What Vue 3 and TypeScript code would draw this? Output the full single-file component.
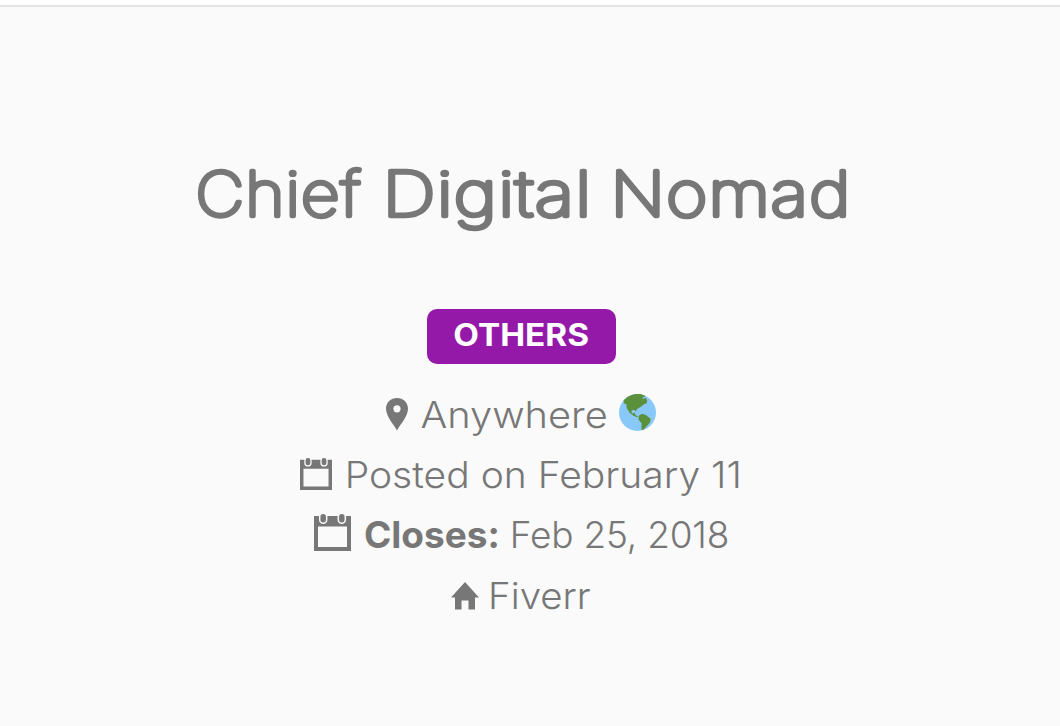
<script setup lang="ts">
import { ref } from 'vue';

type Word = {
    text:string
    x:number
    width:number
}
type Job = {
    title:Word[]
    category:string
    location:string
    posted:string
    closes:string
    company:string
}
const job = ref<Job>({
    title:[
        { text:'Chief', x:4.5, width:166 },
        { text:'Digital', x:191.5, width:210 },
        { text:'Nomad', x:419.5, width:241 }
    ],
    category:'OTHERS',
    location:'Anywhere',
    posted:'Posted on February 11',
    closes:'Feb 25, 2018',
    company:'Fiverr'
})
</script>
<template>
<div class="job-page">
    <div class="job-topbar"></div>
    <header class="job-header">
        <h1 class="job-title">
            <!-- the stroke rounds off the ends of the letters -->
            <svg class="title-text" viewBox="0 0 660 90">
                <text
                    v-for="word in job.title"
                    :key="word.text"
                    :x="word.x"
                    y="66"
                    :textLength="word.width"
                    lengthAdjust="spacingAndGlyphs"
                >{{ word.text }}</text>
            </svg>
        </h1>
        <span class="job-type"><span class="label">{{ job.category }}</span></span>
        <ul class="job-meta">
            <li class="location">
                <svg class="icon-pin" viewBox="0 0 22 33">
                    <path fill-rule="evenodd" d="M11 0C4.8 0 0 4.6 0 10.6C0 18 6.500 25 11 32.500C15.500 25 22 18 22 10.600C22 4.600 17.200 0 11 0ZM11 7.200A3.600 3.600 0 1 1 11 14.400A3.600 3.600 0 1 1 11 7.200Z" />
                </svg>
                <span class="text">{{ job.location }}</span>
                <svg class="icon-globe" viewBox="0 0 36 36">
                    <circle cx="18" cy="18" r="18" fill="#88c9f9" />
                    <path fill="#5c913b" d="M4.500 6.200C8 2.200 13 0 18 0C21 0 23.500 .6 26 2L23.500 3.200L22.800 5L25.800 3.600L27.400 6.200L27 9L24.300 10L21.500 12.500L19 13.600L17.200 15L16.400 17L14.600 15.300L12 16.200L12.600 19L15.300 18.300L15.800 20.400L18.600 21.600L18 22.600L14.600 21.500L10.400 18.400L7.500 13.500L7.200 10L4.700 9Z" />
                    <path fill="#5c913b" d="M19.200 21.200L22.500 19.300L26.500 20.700L30.800 24L30.300 27.500L27.400 31L23.500 35L21.800 34.600L22 28.500L19 25Z" />
                </svg>
            </li>
            <li class="posted">
                <svg class="icon-calendar" viewBox="0 0 37 37">
                    <path fill-rule="evenodd" d="M0 2H37V37H0ZM4 12.500V33H33V12.500Z" />
                    <rect class="ring" x="5.700" y="-.8" width="7" height="10" rx="3.500" />
                    <rect class="ring" x="24.300" y="-.8" width="7" height="10" rx="3.500" />
                </svg>
                <span class="text">{{ job.posted }}</span>
            </li>
            <li class="closes">
                <svg class="icon-calendar" viewBox="0 0 37 37">
                    <path fill-rule="evenodd" d="M0 2H37V37H0ZM4 12.500V33H33V12.500Z" />
                    <rect class="ring" x="5.700" y="-.8" width="7" height="10" rx="3.500" />
                    <rect class="ring" x="24.300" y="-.8" width="7" height="10" rx="3.500" />
                </svg>
                <strong class="text">Closes:</strong>
                <span class="text">{{ job.closes }}</span>
            </li>
            <li class="company">
                <svg class="icon-home" viewBox="0 0 28 28">
                    <path d="M14 0L28 15.500H24V27.500H17.500V18.500H10.500V27.500H4V15.500H0Z" />
                </svg>
                <span class="text">{{ job.company }}</span>
            </li>
        </ul>
    </header>
</div>
</template>
<style>
body {
  background: #fafafa;
}
</style>
<style scoped>
.job-page {
  box-sizing: border-box;
  height: 726px;
  overflow: hidden;
  background: #fafafa;
  color: #777;
  font-family: Inter, "Open Sans", sans-serif;
}
.job-topbar {
  height: 5px;
  background: #fff;
  border-bottom: 2px solid #e3e3e3;
}
.job-header {
  display: flex;
  flex-direction: column;
  align-items: center;
  width: 1042px;
  padding-top: 143px;
}
.job-title {
  display: flex;
  margin: 0;
}
.title-text {
  width: 660px;
  height: 90px;
}
.title-text text {
  fill: #777;
  stroke: #777;
  stroke-width: 4.5;
  stroke-linejoin: round;
  font-size: 61px;
  font-weight: 100;
  letter-spacing: 1px;
}
.job-type {
  display: block;
  box-sizing: border-box;
  width: 189px;
  height: 55px;
  margin-top: 69px;
  border-radius: 10px;
  background: #9519a9;
  color: #fff;
  font-size: 31px;
  font-weight: 700;
  line-height: 52px;
  text-align: center;
}
.job-type .label {
  display: inline-block;
  transform: scaleX(1.075);
}
.job-meta {
  width: 100%;
  margin: 21px 0 0;
  padding: 0;
  list-style: none;
}
.job-meta li {
  display: flex;
  align-items: center;
  justify-content: center;
  height: 60px;
  font-size: 37px;
  font-weight: 300;
  line-height: 60px;
  white-space: nowrap;
}
.job-meta strong {
  font-weight: 700;
}
.location .text {
  margin: 0 6px 0 7px;
  transform: scaleX(1.075);
}
.posted .text {
  margin: 0 10px;
  transform: scaleX(1.055);
}
.closes span.text {
  letter-spacing: -0.2px;
}
.job-meta .closes {
  padding-left: 1px;
}
.job-meta .company {
  padding-top: 1px;
}
.company .text {
  margin: 0 2px;
  transform: scaleX(1.04);
}
svg {
  flex: none;
  overflow: visible;
  fill: #777;
}
.icon-pin {
  width: 22px;
  height: 33px;
  margin: 0 12px 2px 0;
}
.icon-globe {
  width: 37px;
  height: 37px;
  margin: 0 0 5px 12px;
}
.icon-calendar {
  width: 37px;
  height: 37px;
  margin: 0 14px 5px 0;
}
.posted .icon-calendar {
  width: 32px;
  height: 32px;
  margin: 0 13px 3px 0;
}
.closes .icon-calendar {
  margin-right: 13px;
}
.closes .text + .text {
  margin-left: 10px;
}
.ring {
  stroke: #fafafa;
  stroke-width: 1.5;
}
.icon-home {
  width: 28px;
  height: 28px;
  margin-right: 9px;
}
</style>
